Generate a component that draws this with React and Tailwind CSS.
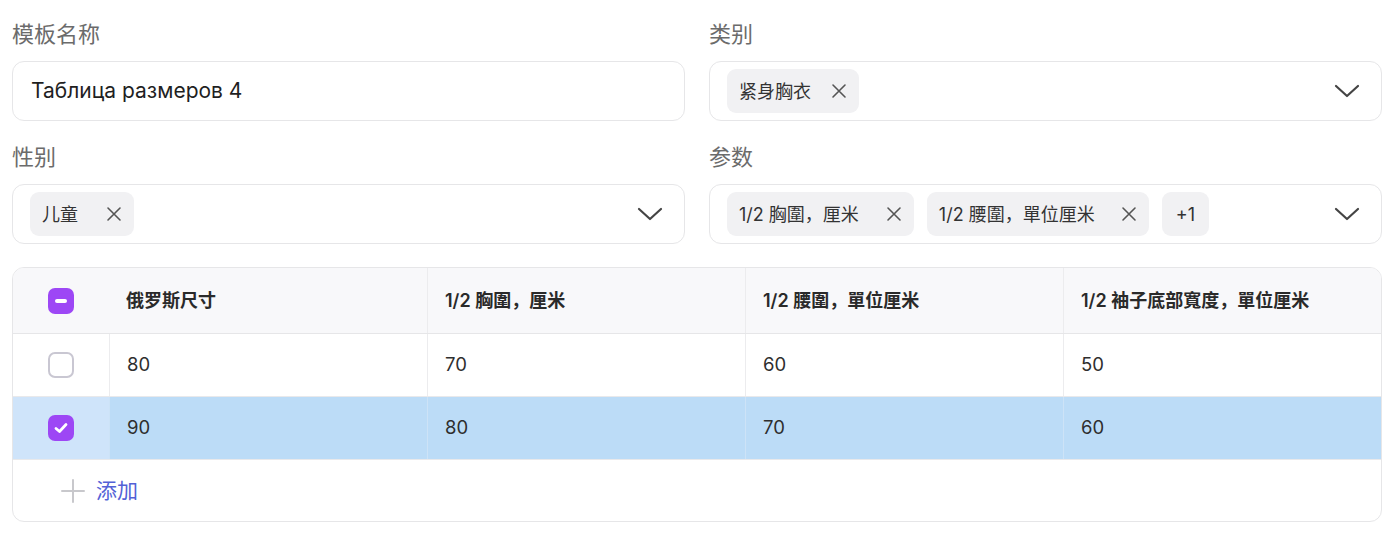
import React from "react";

const font = { fontFamily: '"Inter", "Noto Sans CJK SC", sans-serif' };

function XIcon() {
  return (
    <svg width="16" height="16" viewBox="0 0 16 16" fill="none" stroke="#555" strokeWidth="1.6" strokeLinecap="round">
      <path d="M2 2 L14 14 M14 2 L2 14" />
    </svg>
  );
}

function Chevron() {
  return (
    <svg width="26" height="16" viewBox="0 0 26 16" fill="none" stroke="#444" strokeWidth="2.2" strokeLinecap="round" strokeLinejoin="round">
      <path d="M2 3 L13 13 L24 3" />
    </svg>
  );
}

function Chip({ text, close = true, gap = "gap-[20px]", px = "px-[12px]" }) {
  return (
    <div className={`flex h-[44px] items-center ${gap} rounded-[9px] bg-[#f1f1f3] ${px} text-[18px] text-[#333]`}>
      <span>{text}</span>
      {close && <XIcon />}
    </div>
  );
}

function Field({ label, children }) {
  return (
    <div className="flex flex-col">
      <div className="mb-[12px] h-[30px] text-[22px] leading-[30px] text-[#6b6b6b]">{label}</div>
      {children}
    </div>
  );
}

function Box({ children, chevron }) {
  return (
    <div className="flex h-[60px] items-center rounded-[12px] border border-[#e6e6e8] bg-white pl-[17px] pr-[21px]">
      <div className="flex flex-1 items-center gap-[13px]">{children}</div>
      {chevron && <Chevron />}
    </div>
  );
}

function Checkbox({ state }) {
  if (state === "none") {
    return <div className="h-[26px] w-[26px] rounded-[7px] border-2 border-[#c9c7d2] bg-white" />;
  }
  return (
    <div className="flex h-[26px] w-[26px] items-center justify-center rounded-[7px] bg-[#9d47f5]">
      {state === "some" ? (
        <div className="h-[4px] w-[12px] rounded-full bg-white" />
      ) : (
        <svg width="16" height="16" viewBox="0 0 16 16" fill="none" stroke="white" strokeWidth="2.8" strokeLinecap="round" strokeLinejoin="round">
          <path d="M3 8.5 L6.5 11.5 L13 4.5" />
        </svg>
      )}
    </div>
  );
}

const cols = ["俄罗斯尺寸", "1/2 胸圍，厘米", "1/2 腰圍，單位厘米", "1/2 袖子底部寬度，單位厘米"];
const rows = [
  { vals: ["80", "70", "60", "50"], sel: false },
  { vals: ["90", "80", "70", "60"], sel: true },
];

export default function App() {
  return (
    <div style={font} className="min-h-[534px] w-[1396px] bg-white pl-[12px] pr-[14px] pt-[19px]">
      <div className="grid grid-cols-2 gap-x-[24px] gap-y-[21px]">
        <Field label="模板名称">
          <div className="flex h-[60px] items-center rounded-[12px] border border-[#e6e6e8] bg-white pl-[18px] text-[21px] text-[#1f1f1f]">
            Таблица размеров 4
          </div>
        </Field>
        <Field label="类别">
          <Box chevron>
            <Chip text="紧身胸衣" gap="gap-[20px]" />
          </Box>
        </Field>
        <Field label="性别">
          <Box chevron>
            <Chip text="儿童" gap="gap-[28px]" />
          </Box>
        </Field>
        <Field label="参数">
          <Box chevron>
            <Chip text="1/2 胸圍，厘米" gap="gap-[27px]" />
            <Chip text="1/2 腰圍，單位厘米" gap="gap-[26px]" />
            <Chip text="+1" close={false} px="px-[14px]" />
          </Box>
        </Field>
      </div>

      <div className="mt-[23px] overflow-hidden rounded-[12px] border border-[#e6e6e8]">
        <div className="grid h-[66px] grid-cols-[96px_1fr_1fr_1fr_1fr] border-b border-[#e6e6e8] bg-[#f8f8fa] text-[18px] font-semibold text-[#2a2a2a]">
          <div className="flex items-center justify-center">
            <Checkbox state="some" />
          </div>
          {cols.map((c, i) => (
            <div key={i} className={`flex items-center pl-[17px] ${i > 0 ? "border-l border-[#ececee]" : ""}`}>
              {c}
            </div>
          ))}
        </div>
        {rows.map((r, ri) => (
          <div
            key={ri}
            className={`grid h-[63px] grid-cols-[96px_1fr_1fr_1fr_1fr] border-b border-[#e9e9eb] text-[18.5px] text-[#2e2e2e] ${r.sel ? "bg-[#bcdcf7]" : "bg-white"}`}
          >
            <div className={`flex items-center justify-center ${r.sel ? "bg-[#cfe4fa]" : ""}`}>
              <Checkbox state={r.sel ? "all" : "none"} />
            </div>
            {r.vals.map((v, i) => (
              <div key={i} className={`flex items-center pl-[17px] border-l ${r.sel ? "border-[#cde3f7]" : "border-[#ececee]"}`}>
                {v}
              </div>
            ))}
          </div>
        ))}
        <div className="flex h-[61px] items-center pl-[48px]">
          <svg width="24" height="24" viewBox="0 0 24 24" fill="none" stroke="#c8c8cc" strokeWidth="2" strokeLinecap="round">
            <path d="M12 1 V23 M1 12 H23" />
          </svg>
          <span className="ml-[11px] text-[21px] text-[#5361d6]">添加</span>
        </div>
      </div>
    </div>
  );
}
